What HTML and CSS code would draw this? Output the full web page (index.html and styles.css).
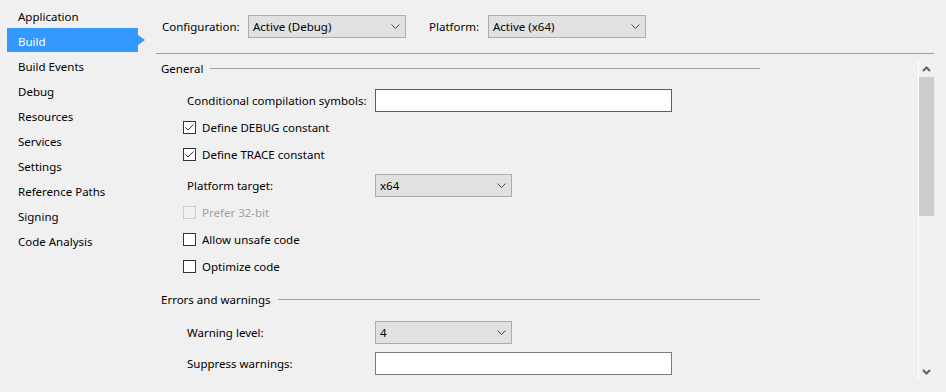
FILE: index.html
```html
<!DOCTYPE html>
<html lang="en">
<head>
  <meta charset="UTF-8">
  <title>Build</title>
  <link rel="stylesheet" href="styles.css">
</head>
<body>
  <div class="window">
    <!-- Property pages -->
    <nav class="side-nav">
      <div class="nav-item">Application</div>
      <div class="nav-item active">Build</div>
      <div class="nav-item">Build Events</div>
      <div class="nav-item">Debug</div>
      <div class="nav-item">Resources</div>
      <div class="nav-item">Services</div>
      <div class="nav-item">Settings</div>
      <div class="nav-item">Reference Paths</div>
      <div class="nav-item">Signing</div>
      <div class="nav-item">Code Analysis</div>
    </nav>

    <main class="page">
      <!-- Configuration bar -->
      <div class="toolbar">
        <span class="tool-label config-label">Configuration:</span>
        <div class="combo combo-wide">
          <span>Active (Debug)</span>
          <svg class="chevron" width="9" height="5" viewBox="0 0 9 5"><polyline points="0.5,0.5 4.5,4.5 8.5,0.5" fill="none" stroke="#444" stroke-width="1"/></svg>
        </div>
        <span class="tool-label platform-label">Platform:</span>
        <div class="combo combo-wide">
          <span>Active (x64)</span>
          <svg class="chevron" width="9" height="5" viewBox="0 0 9 5"><polyline points="0.5,0.5 4.5,4.5 8.5,0.5" fill="none" stroke="#444" stroke-width="1"/></svg>
        </div>
      </div>

      <div class="scroll-area">
        <div class="content">
          <div class="section-head first">
            <span>General</span>
            <div class="rule"></div>
          </div>

          <div class="field-row gap-7">
            <span class="field-label">Conditional compilation symbols:</span>
            <div class="textbox focused"></div>
          </div>
          <div class="check-row">
            <span class="checkbox"><svg width="11" height="11" viewBox="0 0 11 11"><polyline points="1.5,5.5 4,8 9.5,2.5" fill="none" stroke="#333" stroke-width="1"/></svg></span>
            <span>Define DEBUG constant</span>
          </div>
          <div class="check-row">
            <span class="checkbox"><svg width="11" height="11" viewBox="0 0 11 11"><polyline points="1.5,5.5 4,8 9.5,2.5" fill="none" stroke="#333" stroke-width="1"/></svg></span>
            <span>Define TRACE constant</span>
          </div>
          <div class="field-row gap-4">
            <span class="field-label">Platform target:</span>
            <div class="combo combo-small">
              <span>x64</span>
              <svg class="chevron" width="9" height="5" viewBox="0 0 9 5"><polyline points="0.5,0.5 4.5,4.5 8.5,0.5" fill="none" stroke="#444" stroke-width="1"/></svg>
            </div>
          </div>
          <div class="check-row disabled">
            <span class="checkbox"></span>
            <span>Prefer 32-bit</span>
          </div>
          <div class="check-row">
            <span class="checkbox"></span>
            <span>Allow unsafe code</span>
          </div>
          <div class="check-row">
            <span class="checkbox"></span>
            <span>Optimize code</span>
          </div>

          <div class="section-head">
            <span>Errors and warnings</span>
            <div class="rule"></div>
          </div>

          <div class="field-row gap-7">
            <span class="field-label">Warning level:</span>
            <div class="combo combo-small">
              <span>4</span>
              <svg class="chevron" width="9" height="5" viewBox="0 0 9 5"><polyline points="0.5,0.5 4.5,4.5 8.5,0.5" fill="none" stroke="#444" stroke-width="1"/></svg>
            </div>
          </div>
          <div class="field-row gap-4">
            <span class="field-label">Suppress warnings:</span>
            <div class="textbox"></div>
          </div>
        </div>

        <!-- Vertical scrollbar -->
        <div class="scrollbar">
          <div class="scroll-btn">
            <svg width="9" height="6" viewBox="0 0 9 6"><polyline points="1,5 4.5,1.5 8,5" fill="none" stroke="#606060" stroke-width="2"/></svg>
          </div>
          <div class="thumb"></div>
          <div class="track"></div>
          <div class="scroll-btn">
            <svg width="9" height="6" viewBox="0 0 9 6"><polyline points="1,1 4.5,4.5 8,1" fill="none" stroke="#606060" stroke-width="2"/></svg>
          </div>
        </div>
      </div>
    </main>
  </div>
</body>
</html>
```

FILE: styles.css
```css
:root {
  --bg: #f0f0f0;
  --text: #000000;
  --accent: #3399ff;
  --rule: #a0a0a0;
  --combo-bg: #e1e1e1;
  --combo-border: #adadad;
}

body {
  margin: 0;
  height: 392px;
  overflow: hidden;
  background-color: var(--bg);
  color: var(--text);
  font-family: "Segoe UI", "Noto Sans", sans-serif;
  font-size: 11.5px;
}

.window {
  display: flex;
  height: 392px;
}

/* Left navigation */
.side-nav {
  width: 150px;
  flex-shrink: 0;
  padding-top: 3px;
  box-sizing: border-box;
}

.nav-item {
  position: relative;
  height: 25px;
  line-height: 27px;
  padding-left: 18px;
  margin-right: 12px;
  white-space: nowrap;
}

.nav-item.active {
  margin-left: 7px;
  padding-left: 11px;
  height: 24px;
  margin-bottom: 1px;
  background-color: var(--accent);
  color: #ffffff;
}

.nav-item.active::after {
  content: "";
  position: absolute;
  right: -7px;
  top: 7px;
  border-left: 7px solid var(--accent);
  border-top: 5px solid transparent;
  border-bottom: 5px solid transparent;
}

/* Main page */
.page {
  flex: 1;
  display: flex;
  flex-direction: column;
  padding-right: 12px;
  min-width: 0;
}

.toolbar {
  height: 54px;
  box-sizing: border-box;
  display: flex;
  align-items: center;
  padding-left: 6px;
  padding-bottom: 1px;
  margin-left: 6px;
  border-bottom: 1px solid var(--rule);
}

.tool-label {
  white-space: nowrap;
}

.config-label {
  width: 86px;
}

.platform-label {
  width: 59px;
  margin-left: 23px;
}

.combo {
  height: 23px;
  box-sizing: border-box;
  display: flex;
  align-items: center;
  justify-content: space-between;
  padding: 0 5px 0 4px;
  background-color: var(--combo-bg);
  border: 1px solid var(--combo-border);
}

.combo-wide {
  width: 158px;
}

.combo-small {
  width: 137px;
}

.chevron {
  display: block;
}

.scroll-area {
  flex: 1;
  display: flex;
  min-height: 0;
}

.content {
  flex: 1;
}

/* Section headings with trailing rule */
.section-head {
  display: flex;
  align-items: center;
  width: 599px;
  height: 26px;
  margin-left: 11px;
  margin-top: 6px;
}

.section-head.first {
  height: 24px;
  margin-top: 2px;
}

.section-head .rule {
  flex: 1;
  height: 1px;
  margin-left: 7px;
  background-color: var(--rule);
}

.field-row {
  display: flex;
  align-items: center;
  height: 27px;
  padding-left: 37px;
}

.gap-7 {
  margin-top: 7px;
}

.gap-4 {
  margin-top: 4px;
}

.field-label {
  width: 188px;
  white-space: nowrap;
}

.textbox {
  width: 297px;
  height: 23px;
  box-sizing: border-box;
  background-color: #ffffff;
  border: 1px solid #7a7a7a;
}

.textbox.focused {
  border-color: #0078d7;
}

.check-row {
  display: flex;
  align-items: center;
  height: 27px;
  padding-left: 33px;
}

.checkbox {
  width: 13px;
  height: 13px;
  box-sizing: border-box;
  margin-right: 6px;
  display: flex;
  align-items: center;
  justify-content: center;
  background-color: #ffffff;
  border: 1px solid #333333;
}

.check-row.disabled {
  color: #a0a0a0;
}

.check-row.disabled .checkbox {
  border-color: #cccccc;
  background-color: #f0f0f0;
}

/* Scrollbar */
.scrollbar {
  width: 16px;
  height: 320px;
  margin-top: 6px;
  box-sizing: border-box;
  display: flex;
  flex-direction: column;
  border-left: 1px solid #ffffff;
}

.scroll-btn {
  height: 17px;
  display: flex;
  align-items: center;
  justify-content: center;
}

.thumb {
  height: 139px;
  background-color: #cdcdcd;
}

.track {
  flex: 1;
}
```
